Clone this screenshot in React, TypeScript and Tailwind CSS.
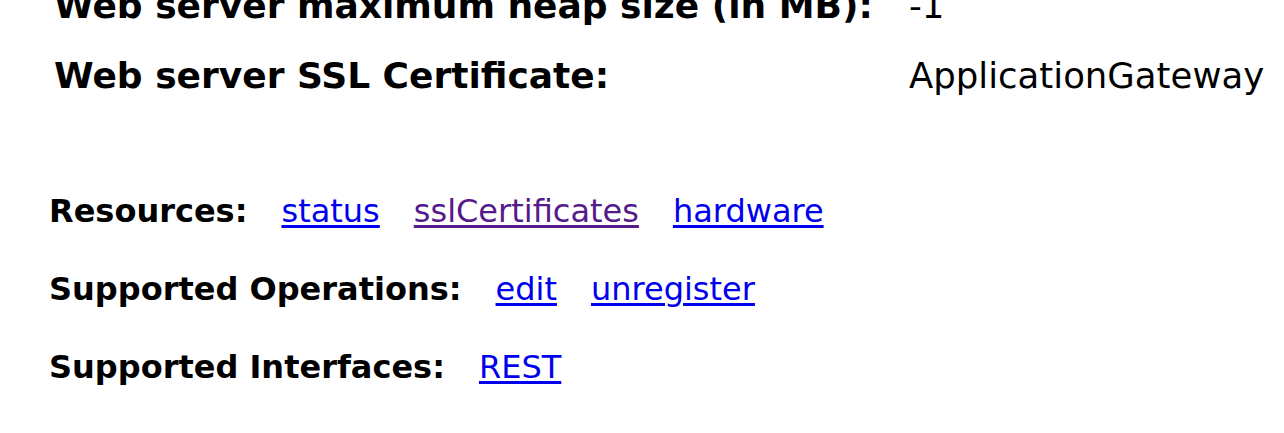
const rows = [
  { label: 'Web server maximum heap size (in MB):', value: '-1' },
  { label: 'Web server SSL Certificate:', value: 'ApplicationGateway' },
]

type Link = { text: string; visited?: boolean }

const sections: { label: string; links: Link[] }[] = [
  {
    label: 'Resources:',
    links: [{ text: 'status' }, { text: 'sslCertificates', visited: true }, { text: 'hardware' }],
  },
  { label: 'Supported Operations:', links: [{ text: 'edit' }, { text: 'unregister' }] },
  { label: 'Supported Interfaces:', links: [{ text: 'REST' }] },
]

export default function App() {
  return (
    <div className="h-[433px] w-[1284px] overflow-hidden bg-white text-black font-['DejaVu_Sans',sans-serif]">
      {/* Properties table */}
      <div className="-mt-[29px] pl-[54px]">
        {rows.map(r => (
          <div key={r.label} className="grid grid-cols-[855px_auto] leading-[70px] whitespace-nowrap">
            <span className="font-bold text-[36px]">{r.label}</span>
            <span className="text-[35.5px]">{r.value}</span>
          </div>
        ))}
      </div>

      {/* Resources / operations */}
      <div className="mt-[61px] pl-[49px]">
        {sections.map(s => (
          <div key={s.label} className="flex text-[32px] leading-[78px] whitespace-nowrap">
            <span className="font-bold">{s.label}</span>
            {s.links.map(l => (
              <a
                key={l.text}
                href="#"
                className={
                  l.visited
                    ? 'ml-[34px] text-[#551a8b] underline decoration-[3px] underline-offset-[3px]'
                    : 'ml-[34px] text-[#0000ee] underline decoration-[3px] underline-offset-[3px]'
                }
              >
                {l.text}
              </a>
            ))}
          </div>
        ))}
      </div>
    </div>
  )
}
